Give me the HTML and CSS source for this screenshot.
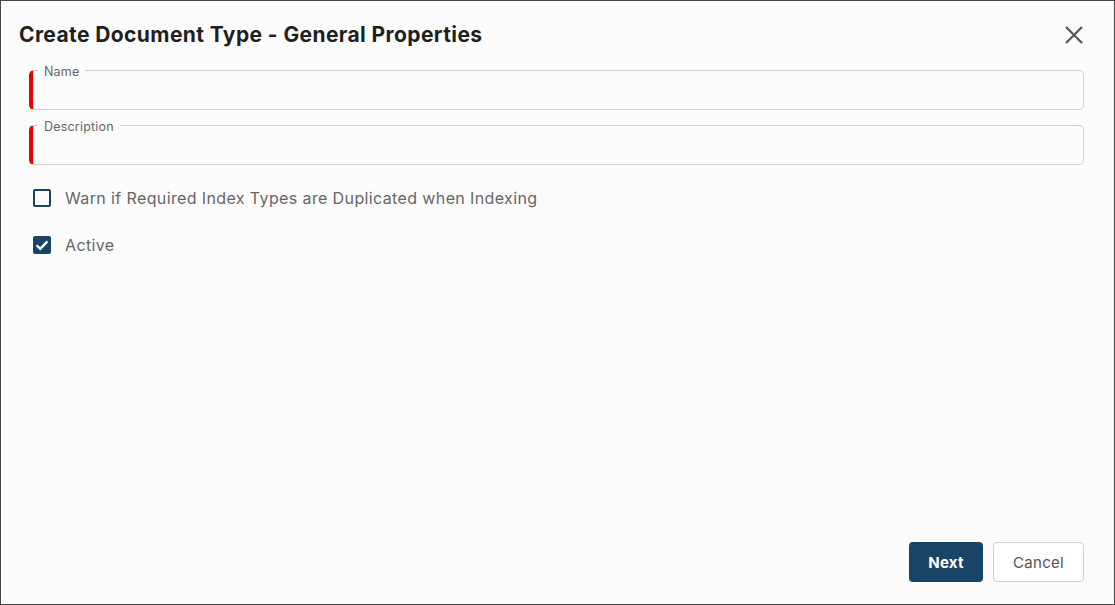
FILE: index.html
```html
<!DOCTYPE html>
<html lang="en">
<head>
<meta charset="utf-8">
<title>Create Document Type</title>
<link rel="stylesheet" href="styles.css">
</head>
<body>
<div class="dialog">
  <div class="header">
    <h1 class="title">Create Document Type - General Properties</h1>
    <button class="close" aria-label="Close">
      <svg width="18" height="18" viewBox="0 0 18 18"><path d="M1 1 L17 17 M17 1 L1 17" stroke="#555" stroke-width="2.2" fill="none"/></svg>
    </button>
  </div>
  <div class="body">
    <div class="field">
      <span class="field-label">Name</span>
    </div>
    <div class="field">
      <span class="field-label">Description</span>
    </div>
    <div class="checks">
      <label class="check">
        <span class="box"></span>
        <span class="check-text">Warn if Required Index Types are Duplicated when Indexing</span>
      </label>
      <label class="check">
        <span class="box checked">
          <svg width="18" height="18" viewBox="0 0 18 18"><path d="M3.6 9.2 L7.3 12.8 L14.4 5.4" stroke="#fff" stroke-width="2.3" fill="none"/></svg>
        </span>
        <span class="check-text">Active</span>
      </label>
    </div>
  </div>
  <div class="footer">
    <button class="btn btn-primary">Next</button>
    <button class="btn btn-secondary">Cancel</button>
  </div>
</div>
</body>
</html>
```
FILE: styles.css
```css
* { box-sizing: border-box; }
html, body { margin: 0; padding: 0; }
body {
  font-family: Inter, "Noto Sans", "Liberation Sans", sans-serif;
  background: #fcfcfc;
}
.dialog {
  width: 1115px;
  height: 605px;
  border: 1px solid #474747;
  background: #fcfcfc;
  display: flex;
  flex-direction: column;
  padding: 0 30px 22px 28px;
}
.header {
  display: flex;
  align-items: center;
  justify-content: space-between;
  height: 68px;
  margin-left: -10px;
  padding-bottom: 1px;
}
.title {
  margin: 0;
  font-size: 21px;
  font-weight: 700;
  color: #1f1f1f;
  letter-spacing: 0.4px;
}
.close {
  border: 0;
  background: transparent;
  padding: 0;
  width: 18px;
  height: 18px;
  margin-right: 1px;
  display: flex;
}
.body {
  display: flex;
  flex-direction: column;
}
.field {
  position: relative;
  height: 40px;
  border: 1px solid #cfcfcf;
  border-left: 4px solid #ee0000;
  border-radius: 5px;
  margin-top: 1px;
  margin-bottom: 14px;
}
.field-label {
  position: absolute;
  top: -6px;
  left: 5px;
  padding: 0 6px;
  background: #fcfcfc;
  font-size: 12.5px;
  line-height: 14px;
  letter-spacing: 0.2px;
  color: #666;
}
.checks {
  display: flex;
  flex-direction: column;
  gap: 23px;
  margin-top: 7px;
  padding-left: 4px;
}
.check {
  display: flex;
  align-items: center;
  height: 24px;
  gap: 14px;
}
.box {
  width: 18px;
  height: 18px;
  border: 2px solid #1a4466;
  border-radius: 2px;
  display: flex;
}
.box.checked {
  background: #1a4466;
  border: 0;
}
.check-text {
  font-size: 16px;
  letter-spacing: 0.38px;
  color: #666;
}
.footer {
  margin-top: auto;
  display: flex;
  justify-content: flex-end;
  gap: 10px;
}
.btn {
  height: 40px;
  border-radius: 4px;
  font-family: Inter, "Noto Sans", "Liberation Sans", sans-serif;
  font-size: 15px;
  letter-spacing: 0.3px;
  padding: 0;
}
.btn-primary {
  width: 74px;
  background: #1a4466;
  border: 0;
  color: #fff;
  font-weight: 700;
}
.btn-secondary {
  width: 91px;
  background: #fff;
  border: 1px solid #cfcfcf;
  color: #555;
}
```
